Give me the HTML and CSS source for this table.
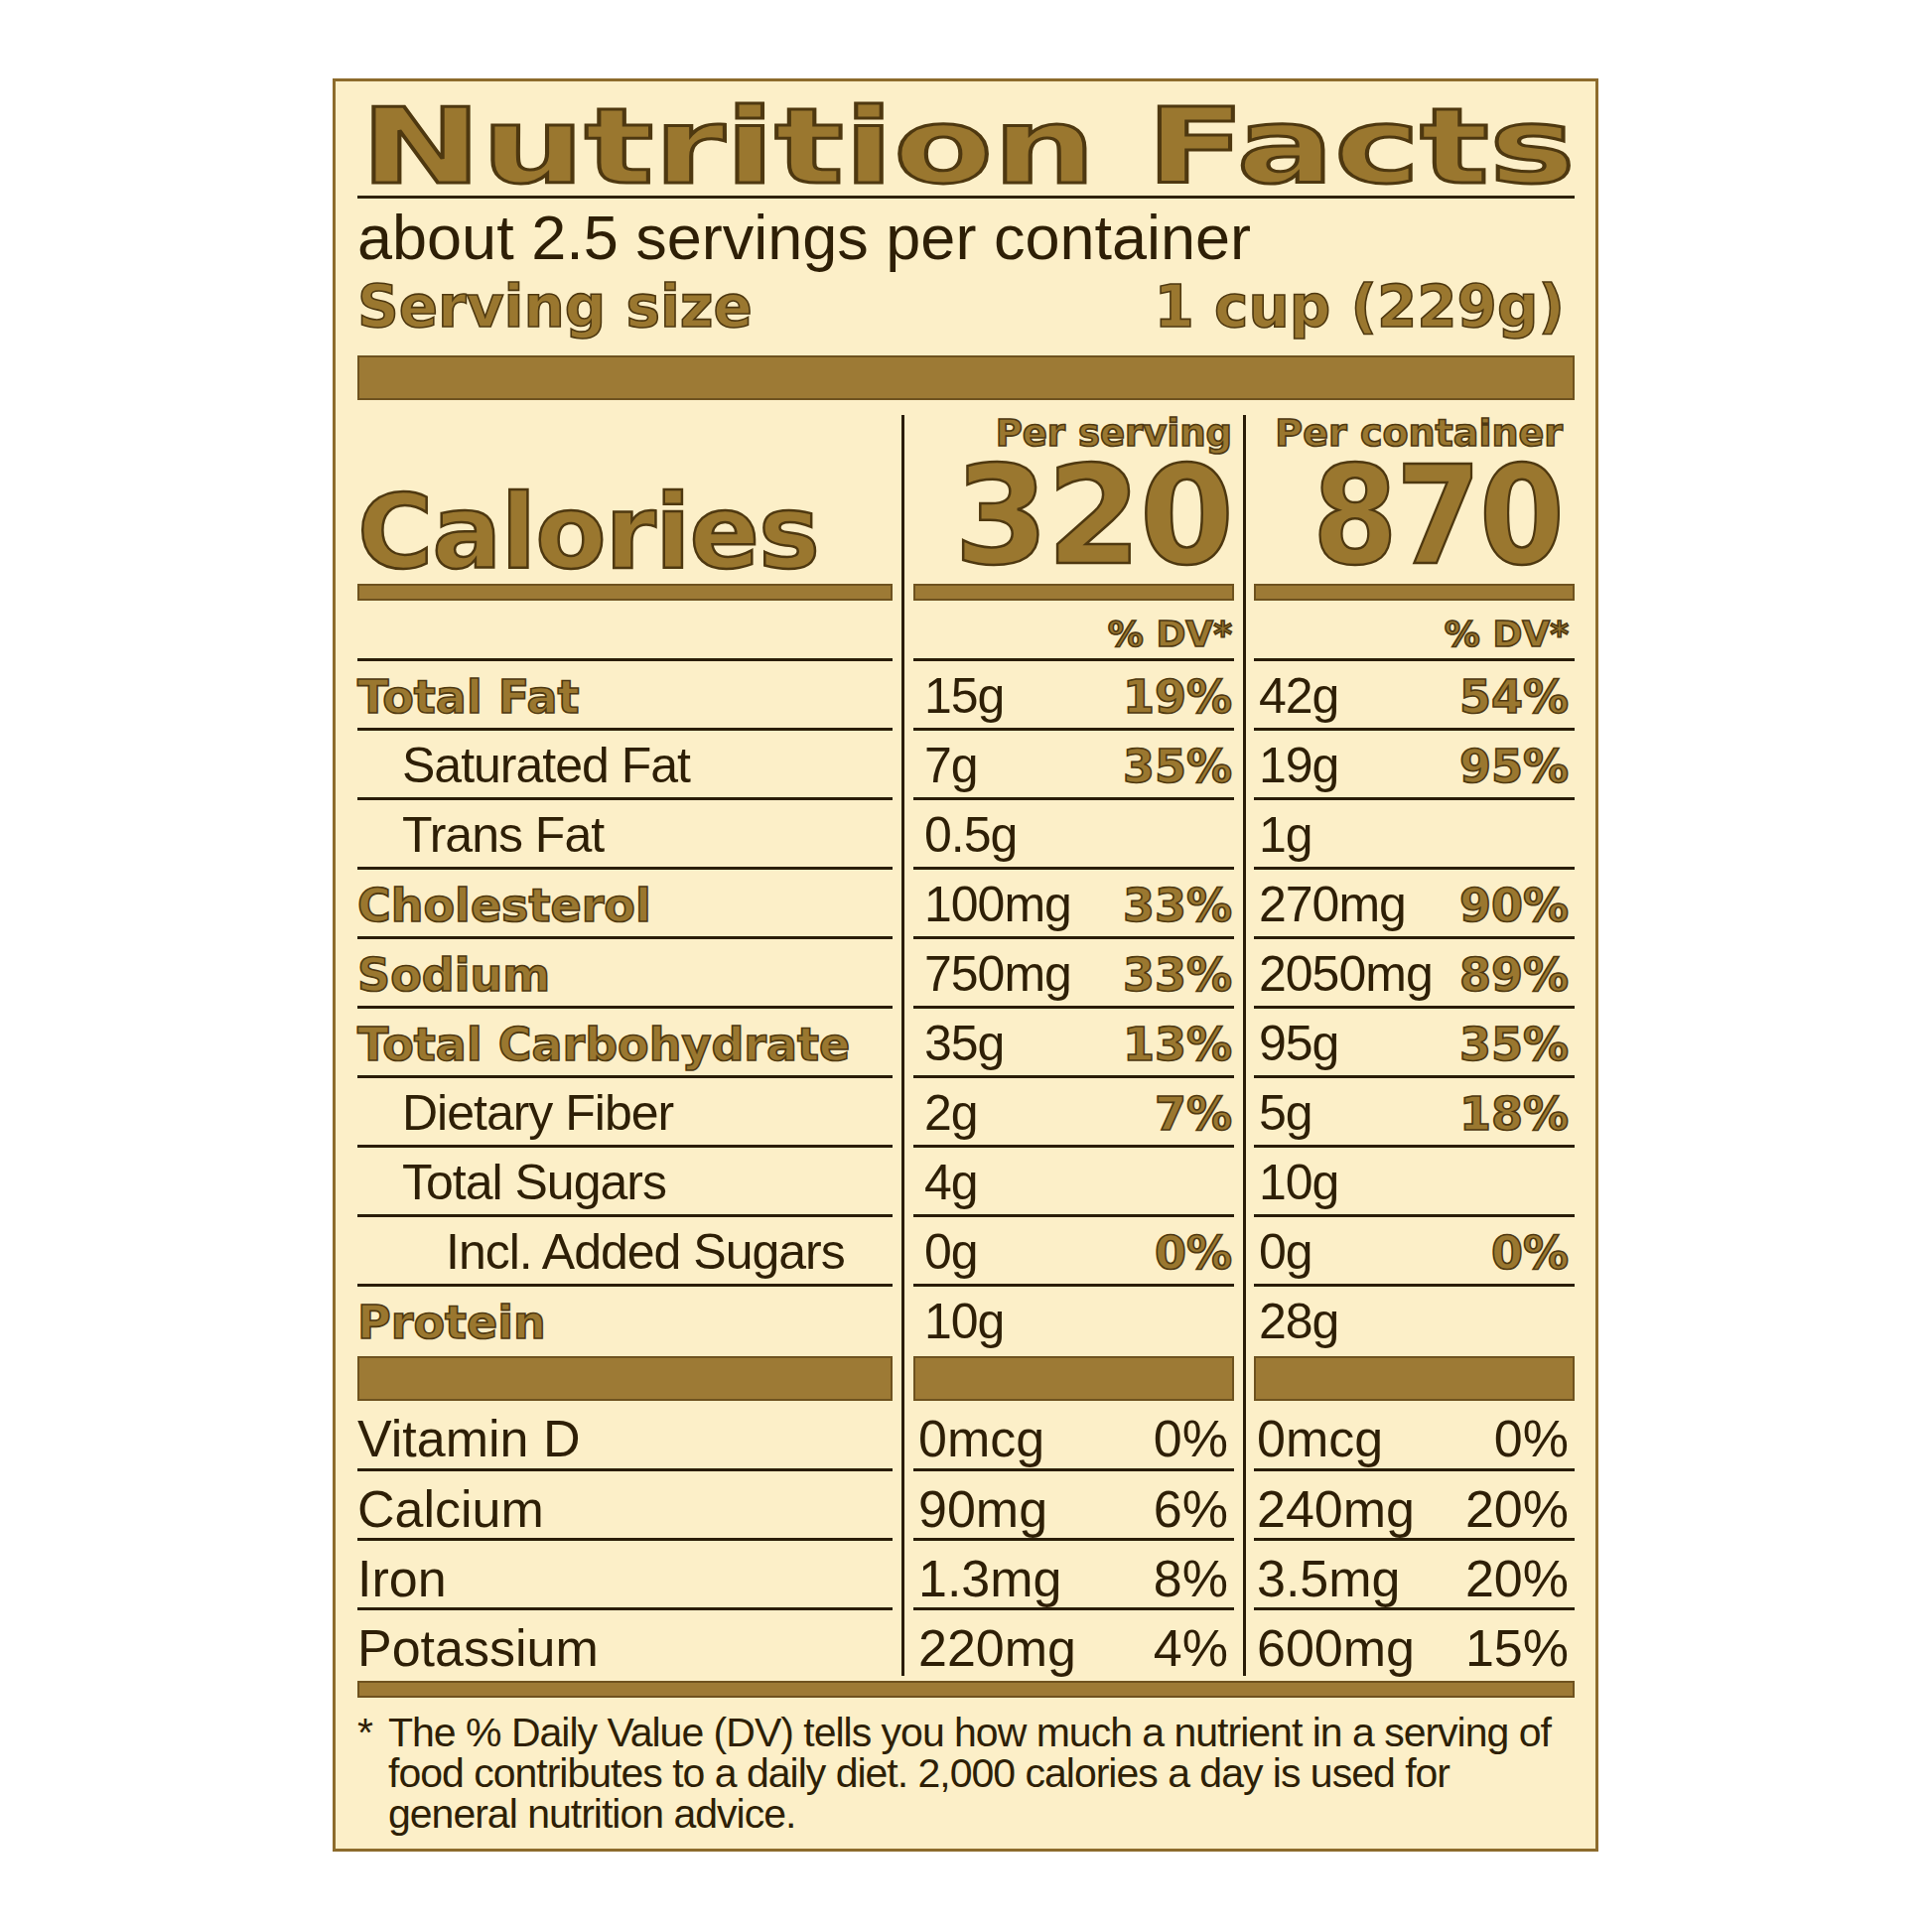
FILE: index.html
```html
<!DOCTYPE html>
<html lang="en">
<head>
<meta charset="utf-8">
<title>Nutrition Facts</title>
<link rel="stylesheet" href="styles.css">
</head>
<body>
<div class="label">
  <div class="title"><span class="gold heavy">Nutrition Facts</span></div>
  <div class="servings">about 2.5 servings per container</div>
  <div class="size gold"><span>Serving size</span><span>1 cup (229g)</span></div>
  <div class="bar bar-thick"></div>

  <div class="grid">
    <div class="vline va"></div>
    <div class="vline vb"></div>

    <div class="c1 hd-left"><span class="calories gold thick">Calories</span></div>
    <div class="c2 hd-col"><span class="per gold">Per serving</span><span class="big gold thick">320</span></div>
    <div class="c3 hd-col hd-right"><span class="per gold">Per container</span><span class="big narrow gold thick">870</span></div>

    <div class="c1 bar"></div>
    <div class="c2 bar"></div>
    <div class="c3 bar"></div>

    <div class="c1 dv"></div>
    <div class="c2 dv"><span class="gold">% DV*</span></div>
    <div class="c3 dv dv-right"><span class="gold">% DV*</span></div>

    <div class="c1 r lbl b gold">Total Fat</div>
    <div class="c2 r val"><span>15g</span><span class="pct gold">19%</span></div>
    <div class="c3 r val"><span>42g</span><span class="pct gold">54%</span></div>

    <div class="c1 r lbl i1">Saturated Fat</div>
    <div class="c2 r val"><span>7g</span><span class="pct gold">35%</span></div>
    <div class="c3 r val"><span>19g</span><span class="pct gold">95%</span></div>

    <div class="c1 r lbl i1">Trans Fat</div>
    <div class="c2 r val"><span>0.5g</span></div>
    <div class="c3 r val"><span>1g</span></div>

    <div class="c1 r lbl b gold">Cholesterol</div>
    <div class="c2 r val"><span>100mg</span><span class="pct gold">33%</span></div>
    <div class="c3 r val"><span>270mg</span><span class="pct gold">90%</span></div>

    <div class="c1 r lbl b gold">Sodium</div>
    <div class="c2 r val"><span>750mg</span><span class="pct gold">33%</span></div>
    <div class="c3 r val"><span>2050mg</span><span class="pct gold">89%</span></div>

    <div class="c1 r lbl b gold">Total Carbohydrate</div>
    <div class="c2 r val"><span>35g</span><span class="pct gold">13%</span></div>
    <div class="c3 r val"><span>95g</span><span class="pct gold">35%</span></div>

    <div class="c1 r lbl i1">Dietary Fiber</div>
    <div class="c2 r val"><span>2g</span><span class="pct gold">7%</span></div>
    <div class="c3 r val"><span>5g</span><span class="pct gold">18%</span></div>

    <div class="c1 r lbl i1">Total Sugars</div>
    <div class="c2 r val"><span>4g</span></div>
    <div class="c3 r val"><span>10g</span></div>

    <div class="c1 r lbl i2">Incl. Added Sugars</div>
    <div class="c2 r val"><span>0g</span><span class="pct gold">0%</span></div>
    <div class="c3 r val"><span>0g</span><span class="pct gold">0%</span></div>

    <div class="c1 r lbl b gold last">Protein</div>
    <div class="c2 r val last"><span>10g</span></div>
    <div class="c3 r val last"><span>28g</span></div>

    <div class="c1 bar"></div>
    <div class="c2 bar"></div>
    <div class="c3 bar"></div>

    <div class="c1 v">Vitamin D</div>
    <div class="c2 v vval"><span>0mcg</span><span>0%</span></div>
    <div class="c3 v vval"><span>0mcg</span><span>0%</span></div>

    <div class="c1 v">Calcium</div>
    <div class="c2 v vval"><span>90mg</span><span>6%</span></div>
    <div class="c3 v vval"><span>240mg</span><span>20%</span></div>

    <div class="c1 v">Iron</div>
    <div class="c2 v vval"><span>1.3mg</span><span>8%</span></div>
    <div class="c3 v vval"><span>3.5mg</span><span>20%</span></div>

    <div class="c1 v last">Potassium</div>
    <div class="c2 v vval last"><span>220mg</span><span>4%</span></div>
    <div class="c3 v vval last"><span>600mg</span><span>15%</span></div>
  </div>

  <div class="bar bar-bottom"></div>

  <div class="foot">
    <span class="ast">*</span>
    <p class="foot-text">
      <span>The % Daily Value (DV) tells you how much a nutrient in a serving of</span>
      <span>food contributes to a daily diet. 2,000 calories a day is used for</span>
      <span>general nutrition advice.</span>
    </p>
  </div>
</div>
</body>
</html>
```

FILE: styles.css
```css
* { box-sizing: border-box; }

html, body {
  margin: 0;
  padding: 0;
  background: #ffffff;
}

body {
  font-family: "Liberation Sans", Arial, sans-serif;
  color: #2e1f06;
}

.label {
  width: 1275px;
  margin: 79px 0 0 335px;
  background: #fcefc8;
  border: 3px solid #8d6b2c;
  padding: 17px 21px 14px 22px;
}

.gold {
  color: #9a772f;
  -webkit-text-stroke: 1.6px #4e3810;
}

.gold.thick {
  -webkit-text-stroke: 2.5px #4e3810;
}

.gold.heavy {
  -webkit-text-stroke: 3px #4e3810;
}

.title {
  font-family: "DejaVu Sans", sans-serif;
  font-weight: 700;
  font-size: 106px;
  line-height: 98px;
  white-space: nowrap;
  border-bottom: 3px solid #2e220b;
}

.title span {
  display: inline-block;
  margin-left: 3px;
  transform: scaleX(1.375);
  transform-origin: 0 50%;
}

.servings {
  margin-top: 8px;
  font-size: 63px;
  line-height: 62px;
  white-space: nowrap;
}

.size {
  display: flex;
  justify-content: space-between;
  margin-top: 10px;
  padding-right: 10px;
  font-family: "DejaVu Sans", sans-serif;
  font-weight: 700;
  font-size: 58px;
  line-height: 58px;
  white-space: nowrap;
}

.bar {
  background: #9d7a35;
  box-shadow: inset 0 0 0 2px #6e521f;
}

.bar-thick {
  height: 45px;
  margin-top: 20px;
}

.grid {
  display: grid;
  margin-top: 15px;
  grid-template-columns: 539px 21px 323px 20px 323px;
  grid-template-rows: 170px 17px 61px repeat(10, 70px) 45px 71px 70px 70px 66px;
}

.vline {
  grid-row: 1 / -1;
  width: 3px;
  justify-self: center;
  background: #2a1d07;
}

.va { grid-column: 2; }
.vb { grid-column: 4; }

.c1 { grid-column: 1; }
.c2 { grid-column: 3; }
.c3 { grid-column: 5; }

/* header with calories */
.hd-left {
  display: flex;
  align-items: flex-end;
}

.calories {
  font-family: "DejaVu Sans", sans-serif;
  font-weight: 700;
  font-size: 104px;
  line-height: 104px;
  letter-spacing: -1px;
  white-space: nowrap;
}

.hd-col {
  display: flex;
  flex-direction: column;
  justify-content: space-between;
  align-items: flex-end;
  padding-right: 2px;
}

.hd-right {
  padding-right: 12px;
}

.per {
  font-family: "DejaVu Sans", sans-serif;
  font-weight: 700;
  font-size: 37px;
  line-height: 37px;
  white-space: nowrap;
}

.hd-right .per {
  font-size: 38px;
}

.big {
  font-family: "DejaVu Sans", sans-serif;
  font-weight: 700;
  font-size: 137px;
  line-height: 128px;
  letter-spacing: -2px;
  margin-bottom: 4px;
}

.big.narrow {
  letter-spacing: -2px;
  transform: scaleX(0.9);
  transform-origin: 100% 50%;
}

/* % DV row */
.dv {
  display: flex;
  justify-content: flex-end;
  align-items: flex-end;
  padding-right: 2px;
  padding-bottom: 6px;
  border-bottom: 3px solid #2a1d07;
  font-family: "DejaVu Sans", sans-serif;
  font-weight: 700;
  font-size: 36px;
  line-height: 36px;
  white-space: nowrap;
}

.dv-right {
  padding-right: 6px;
}

/* nutrient rows */
.r {
  border-bottom: 3px solid #2a1d07;
  padding-top: 4px;
  font-size: 50px;
  line-height: 63px;
  letter-spacing: -1px;
  white-space: nowrap;
}

.last {
  border-bottom: none;
}

.lbl.b {
  padding-top: 5px;
  font-family: "DejaVu Sans", sans-serif;
  font-weight: 700;
  font-size: 46px;
  letter-spacing: 0;
}

.i1 { padding-left: 45px; }
.i2 { padding-left: 89px; }

.val {
  display: flex;
  justify-content: space-between;
  align-items: baseline;
}

.c2.val {
  padding-left: 11px;
  padding-right: 2px;
}

.c3.val {
  padding-left: 5px;
  padding-right: 6px;
}

.pct {
  font-family: "DejaVu Sans", sans-serif;
  font-weight: 700;
  font-size: 46px;
  letter-spacing: 0;
}

/* vitamins & minerals */
.v {
  border-bottom: 3px solid #2a1d07;
  padding-top: 8px;
  font-size: 52px;
  line-height: 60px;
  white-space: nowrap;
}

.v.last {
  border-bottom: none;
}

.vval {
  display: flex;
  justify-content: space-between;
}

.c2.vval {
  padding-left: 5px;
  padding-right: 6px;
}

.c3.vval {
  padding-left: 3px;
  padding-right: 6px;
}

.bar-bottom {
  height: 17px;
  margin-top: 5px;
}

/* footnote */
.foot {
  display: flex;
  margin-top: 15px;
  font-size: 41px;
  line-height: 41px;
  letter-spacing: -1px;
}

.ast {
  flex: 0 0 31px;
}

.foot-text {
  margin: 0;
}

.foot-text span {
  display: block;
  white-space: nowrap;
}
```
